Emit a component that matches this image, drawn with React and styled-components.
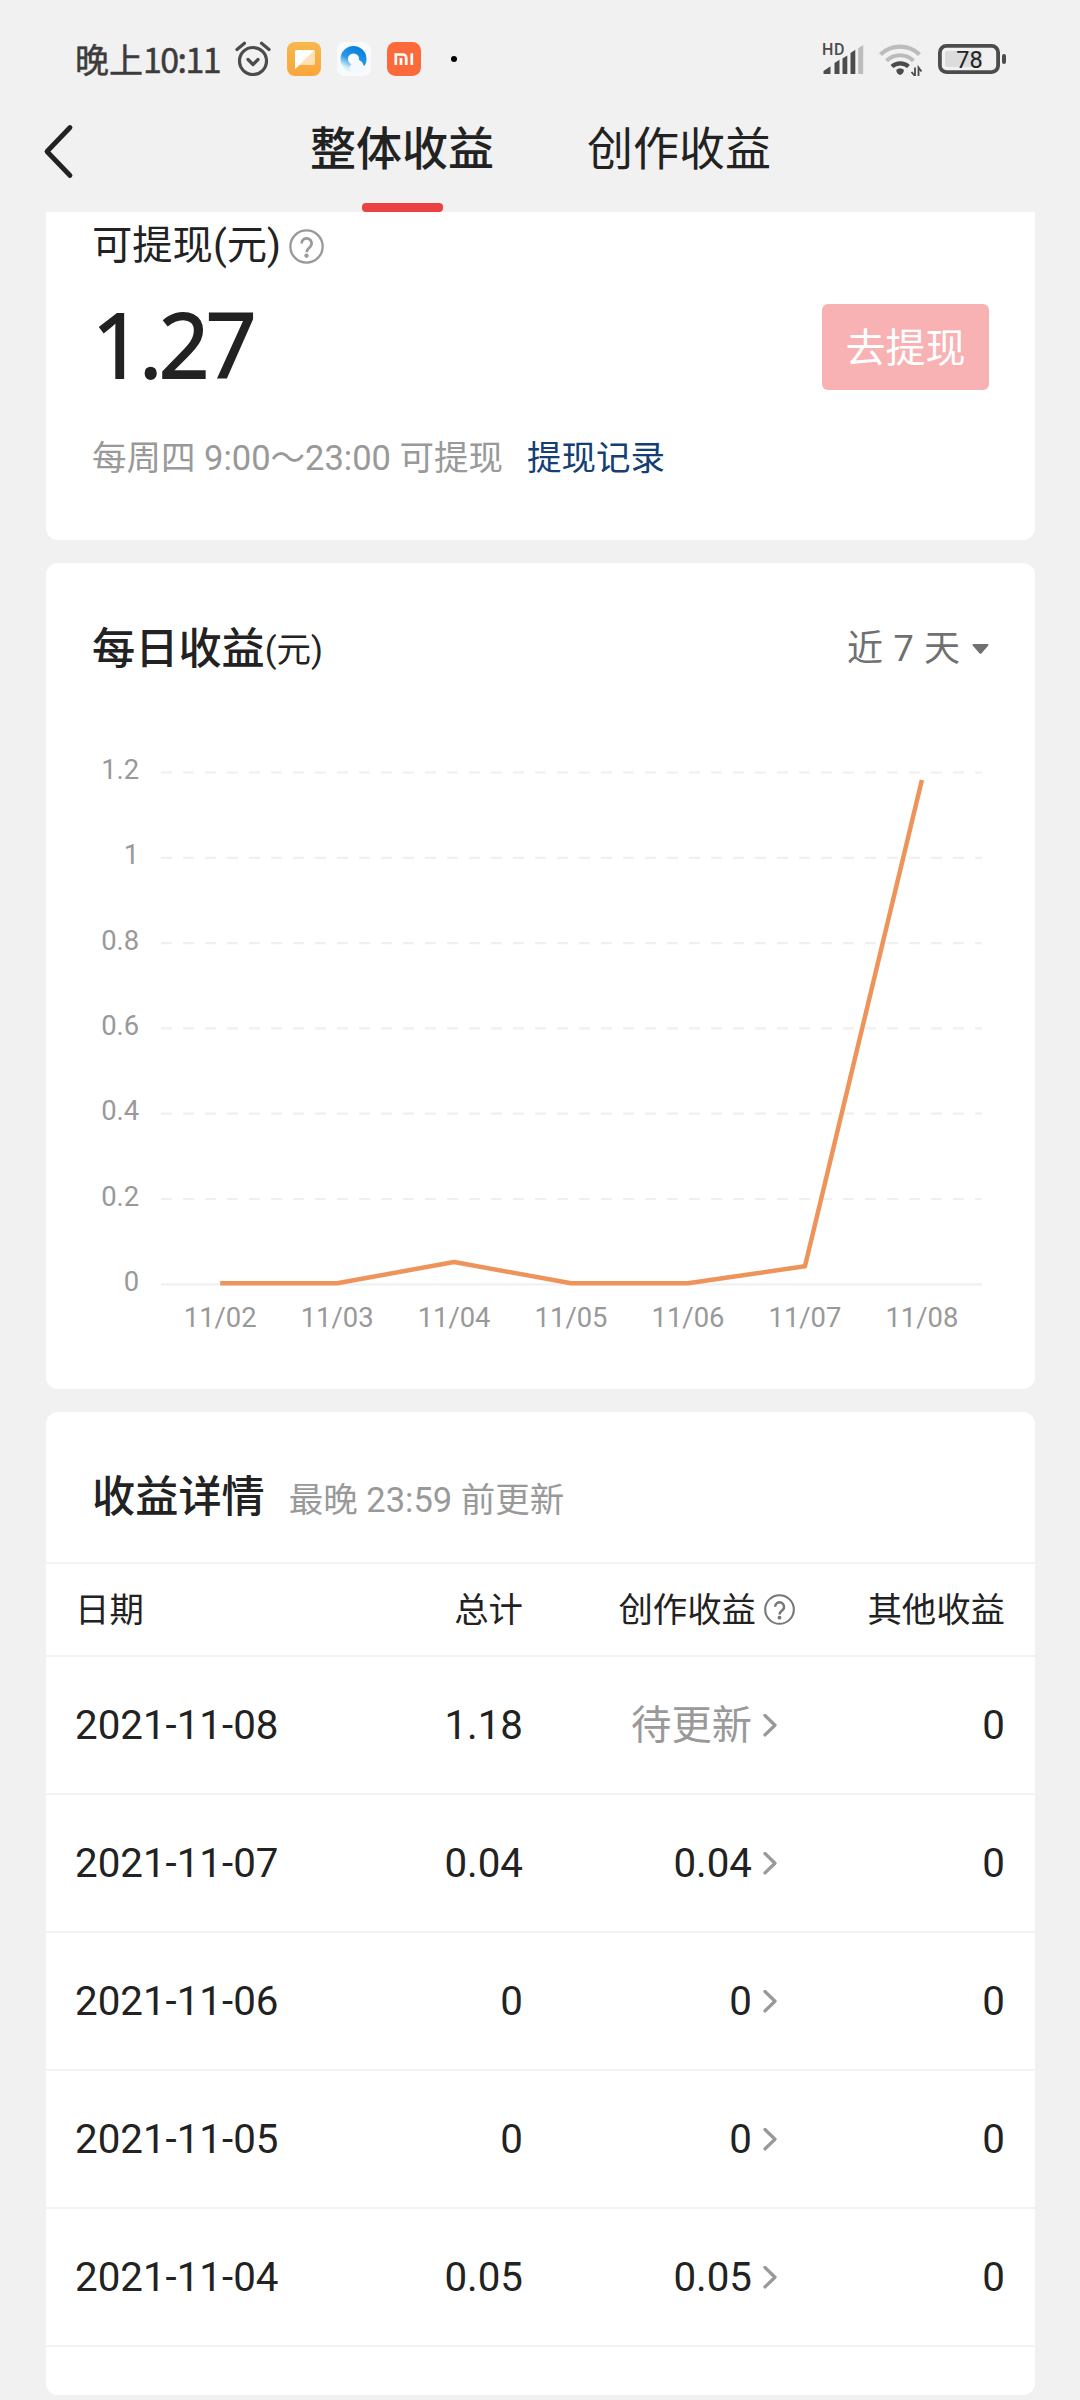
import React, { useState } from 'react';
import styled, { createGlobalStyle } from 'styled-components';

const GlobalStyle = createGlobalStyle`
  * {
    box-sizing: border-box;
  }
  body {
    margin: 0;
    background: #f1f1f1;
    color: #222;
    font-family: Roboto, "Noto Sans CJK SC", sans-serif;
  }
  svg {
    display: block;
    flex: none;
  }
`;

const tabs = ['整体收益', '创作收益'];

const daily = [
    { day: '11/02', value: 0 },
    { day: '11/03', value: 0 },
    { day: '11/04', value: 0.05 },
    { day: '11/05', value: 0 },
    { day: '11/06', value: 0 },
    { day: '11/07', value: 0.04 },
    { day: '11/08', value: 1.18 },
];

const ticks = [1.2, 1, 0.8, 0.6, 0.4, 0.2, 0];

const details = [
    { date: '2021-11-08', total: '1.18', creation: null, other: '0' },
    { date: '2021-11-07', total: '0.04', creation: '0.04', other: '0' },
    { date: '2021-11-06', total: '0', creation: '0', other: '0' },
    { date: '2021-11-05', total: '0', creation: '0', other: '0' },
    { date: '2021-11-04', total: '0.05', creation: '0.05', other: '0' },
];

const Page = styled.div`
  width: 1080px;
  height: 2400px;
  overflow: hidden;
  background: #f1f1f1;
`;

const StatusBar = styled.div`
  display: flex;
  align-items: center;
  justify-content: space-between;
  height: 88px;
  padding: 30px 74px 0 75px;
`;

const StatusGroup = styled.div`
  display: flex;
  align-items: center;
  gap: ${(props) => props.$gap}px;
`;

const Clock = styled.div`
  width: 144px;
  font: 400 34px/40px "Noto Sans CJK SC", sans-serif;
  white-space: nowrap;
  color: #3c3c3c;
  -webkit-text-stroke: 0.5px #3c3c3c;
`;

const ClockDigits = styled.span`
  letter-spacing: -1.6px;
`;

const Dot = styled.div`
  width: 6px;
  height: 6px;
  margin-left: 14px;
  border-radius: 50%;
  background: #000;
`;

const NavBar = styled.div`
  display: flex;
  height: 124px;
  padding-left: 43px;
`;

const BackButton = styled.button`
  width: 268px;
  height: 124px;
  padding: 35px 0 0;
  border: 0;
  background: none;
  align-self: flex-start;
  display: flex;
`;

const Tabs = styled.div`
  display: flex;
  gap: 95px;
`;

const Tab = styled.div`
  display: flex;
  flex-direction: column;
  align-items: center;
  justify-content: space-between;
  width: 182px;
  padding-top: 32px;
  font-size: 46px;
  line-height: 58px;
  font-weight: ${(props) => (props.$active ? 500 : 400)};
  white-space: nowrap;

  &::after {
    content: '';
    width: 81px;
    height: 9px;
    border-radius: 4px;
    background: ${(props) => (props.$active ? '#ec4142' : 'transparent')};
  }
`;

const Content = styled.div`
  display: flex;
  flex-direction: column;
  gap: 23px;
  padding: 0 45px 0 46px;
`;

const Card = styled.section`
  height: ${(props) => props.$height}px;
  border-radius: ${(props) => (props.$cut ? '0 0 12px 12px' : '12px')};
  background: #fff;
`;

const Balance = styled.div`
  display: flex;
  flex-direction: column;
  padding: 9px 46px 0 46px;
`;

const BalanceLabel = styled.div`
  display: flex;
  align-items: center;
  gap: 8px;
  height: 50px;
  font-size: 40.3px;
  line-height: 50px;
`;

const BalanceRow = styled.div`
  display: flex;
  align-items: center;
  justify-content: space-between;
  height: 86px;
  margin-top: 33px;
`;

const Amount = styled.div`
  padding-bottom: 6px;
  font: 400 89px/80px "Open Sans", sans-serif;
  letter-spacing: -3.8px;
  -webkit-text-stroke: 1.8px #222;
`;

const WithdrawButton = styled.button`
  width: 167px;
  height: 86px;
  padding: 4px 0 0;
  border: 0;
  border-radius: 6px;
  background: #f9b2b4;
  color: #fff;
  font: 400 40px/50px Roboto, "Noto Sans CJK SC", sans-serif;
`;

const Hint = styled.div`
  display: flex;
  gap: 24px;
  margin-top: 46px;
  font-size: 34.5px;
  line-height: 44px;
  color: #999;
  white-space: nowrap;
`;

const RecordLink = styled.a`
  color: #133f76;
`;

const CardHeader = styled.div`
  display: flex;
  align-items: center;
  justify-content: space-between;
  padding: 60px 46px 0 46px;
`;

const Title = styled.h2`
  display: flex;
  align-items: center;
  margin: 0;
  font-size: 43.2px;
  line-height: 54px;
  font-weight: 500;
  white-space: nowrap;
`;

const Unit = styled.span`
  font-size: 34.5px;
  font-weight: 400;
`;

const Range = styled.div`
  display: flex;
  align-items: center;
  gap: 12px;
  padding-bottom: 2px;
  font-size: 36px;
  line-height: 48px;
  word-spacing: 1.4px;
  color: #707070;
`;

const Chart = styled.svg`
  margin-top: -2px;
  font-family: Roboto, sans-serif;
  font-size: 27.4px;
  fill: #999;
`;

const DetailHeader = styled.div`
  display: flex;
  align-items: center;
  gap: 24px;
  height: 150px;
  padding: 22px 46px 0;
`;

const UpdateNote = styled.div`
  padding-top: 4px;
  font-size: 34.5px;
  line-height: 44px;
  color: #999;
`;

const Row = styled.div`
  display: grid;
  grid-template-columns: 248px 200px 272px 210px;
  align-items: center;
  height: ${(props) => (props.$head ? 93 : 138)}px;
  padding: ${(props) => (props.$head ? 0 : 2)}px 30px 0 29px;
  border-top: 2px solid #f3f3f3;
  font-size: ${(props) => (props.$head ? 34.4 : 40.3)}px;
  line-height: 50px;
`;

const Cell = styled.div`
  display: flex;
  align-items: center;
  justify-content: ${(props) => (props.$left ? 'flex-start' : 'flex-end')};
  gap: ${(props) => props.$gap || 0}px;
  padding-right: ${(props) => props.$inset || 0}px;
  color: ${(props) => (props.$muted ? '#999' : '#222')};
  white-space: nowrap;
`;

const TableEnd = styled.div`
  border-top: 2px solid #f3f3f3;
`;

const AlarmIcon = () => (
    <svg width="36" height="36" viewBox="0 0 36 36" fill="none" stroke="#4c4c4c" strokeWidth="3.2" strokeLinecap="round" strokeLinejoin="round">
        <circle cx="18" cy="20" r="13.5" />
        <path d="M13 18.5l5 5 5-5M2 8.5l7.5-6.2M34 8.5l-7.5-6.2" />
    </svg>
);

const NoteAppIcon = () => (
    <svg width="34" height="34" viewBox="0 0 34 34">
        <defs>
            <linearGradient id="note" x1="0" y1="0" x2="0" y2="1">
                <stop offset="0" stopColor="#f6b84c" />
                <stop offset="1" stopColor="#fba53c" />
            </linearGradient>
        </defs>
        <rect width="34" height="34" rx="8" fill="url(#note)" />
        <path d="M10 8h16a2 2 0 0 1 2 2v11a2 2 0 0 1-2 2H13l-5 4V10a2 2 0 0 1 2-2z" fill="#ffe2b4" />
        <path d="M10 8h17.5L8 27V10a2 2 0 0 1 2-2z" fill="#fff" />
    </svg>
);

const BrowserAppIcon = () => (
    <svg width="34" height="34" viewBox="0 0 34 34">
        <defs>
            <linearGradient id="ring" x1="0.7" y1="0" x2="0.2" y2="1">
                <stop offset="0" stopColor="#0c83df" />
                <stop offset="0.55" stopColor="#2b9be8" />
                <stop offset="1" stopColor="#d9effc" />
            </linearGradient>
        </defs>
        <rect width="34" height="34" rx="8" fill="#f8fafc" />
        <circle cx="16.5" cy="17" r="9.3" fill="none" stroke="url(#ring)" strokeWidth="7.4" />
        <path d="M14 30a5 5 0 0 1 .6-8 5.5 5.5 0 0 1 9-3 5 5 0 0 1 2.6 3.8A4 4 0 0 1 26.5 30z" fill="#f3f9fe" />
    </svg>
);

const MiAppIcon = () => (
    <svg width="34" height="34" viewBox="0 0 34 34">
        <rect width="34" height="34" rx="8.5" fill="#fc693a" />
        <path d="M8.8 23V12.5h7.2a3.2 3.2 0 0 1 3.2 3.2V23M14 16v7M24.8 11.2V23" fill="none" stroke="#fff" strokeWidth="2.7" />
    </svg>
);

const SignalIcon = () => (
    <svg width="42" height="42" viewBox="0 -4 42 42" fill="#4c4c4c">
        <text x="0" y="13" fontSize="16" fontWeight="500" letterSpacing="0.6" fontFamily="Roboto">HD</text>
        <path d="M1.5 32v-3l7-4.8V32zM12.5 32V21l5-3.2V32zM20.5 32V16.5l4.8-3V32zM28.5 32V11l4.8-3.2V32z" />
        <path d="M36.2 32V6.2L41.2 3v29z" fill="#bcbcbc" />
    </svg>
);

const WifiIcon = () => (
    <svg width="44" height="34" viewBox="0 0 44 34" fill="none" strokeWidth="4.2">
        <path d="M1.5 12.5a28 28 0 0 1 39 0" stroke="#bcbcbc" />
        <path d="M7.5 18.7a19.5 19.5 0 0 1 27 0" stroke="#bcbcbc" />
        <path d="M13 24.5a12.5 12.5 0 0 1 16.5 0" stroke="#4c4c4c" />
        <path d="M17.3 27.8a6 6 0 0 1 7.6 0c0 2.8-1.5 4.7-3.8 5.2-2.3-.5-3.8-2.4-3.8-5.2z" fill="#4c4c4c" />
        <path d="M36 25.5v8.500l-3.500-4M39.500 34v-8.500l3 4" stroke="#4c4c4c" strokeWidth="1.8" />
    </svg>
);

const BatteryIcon = () => (
    <svg width="68" height="30" viewBox="0 0 68 30">
        <rect x="7" y="7" width="37" height="16" rx="2" fill="#dcdcdc" />
        <rect x="1.9" y="1.9" width="58.2" height="26.2" rx="6.5" fill="none" stroke="#4c4c4c" strokeWidth="3.8" />
        <rect x="64" y="10" width="4" height="10" rx="2" fill="#4c4c4c" />
        <text x="31.5" y="23.5" fontSize="23.5" fontWeight="400" textAnchor="middle" fontFamily="Roboto" fill="#222">78</text>
    </svg>
);

const HelpIcon = ({ size, color }) => (
    <svg width={size} height={size} viewBox="0 0 34 34" fill="none" stroke={color} strokeWidth="2.3">
        <circle cx="17" cy="17" r="15.7" />
        <path d="M12.2 14a4.9 4.9 0 1 1 8.3 3.5c-2 1.7-3.4 2.4-3.4 5" strokeWidth="2.7" />
        <circle cx="17" cy="26" r="2.1" fill={color} stroke="none" />
    </svg>
);

const BackIcon = () => (
    <svg width="32" height="56" viewBox="0 0 32 56" fill="none" stroke="#222" strokeWidth="4.8" strokeLinecap="round" strokeLinejoin="round">
        <path d="M27 4.5L4 28.5l23 24" />
    </svg>
);

const ArrowIcon = () => (
    <svg width="14" height="24" viewBox="0 0 14 24" fill="none" stroke="#999" strokeWidth="3.3" strokeLinecap="round" strokeLinejoin="round">
        <path d="M2 1.5l10 9.700-10 9.700" />
    </svg>
);

const CaretIcon = () => (
    <svg width="17" height="12" viewBox="0 0 17 12">
        <path d="M1.5 1h14c1 0 1.3 1 .6 1.7L9.6 10.2c-.6.7-1.6.7-2.2 0L.9 2.7C.2 2 .5 1 1.5 1z" fill="#707070" />
    </svg>
);

// chart scale: 6 steps of 0.2 over the plot height
const chartTop = 97.5;
const chartBottom = 609.3;
const toX = (index) => 174.2 + index * 116.95;
const toY = (value) => chartBottom - (value / 1.2) * (chartBottom - chartTop);

function EarningsChart() {
    const points = daily.map((item, i) => `${toX(i)},${toY(item.value) - 1}`).join(' ');

    return (
        <Chart width="989" height="714" viewBox="0 0 989 714">
            {ticks.map((tick) => (
                <g key={tick}>
                    <line
                        x1="115"
                        x2="936"
                        y1={toY(tick)}
                        y2={toY(tick)}
                        stroke="#f0f0f0"
                        strokeWidth="2.2"
                        strokeDasharray={tick === 0 ? undefined : '11 11'}
                    />
                    <text x="93.2" y={toY(tick) + 6.5} textAnchor="end">{tick}</text>
                </g>
            ))}
            {daily.map((item, i) => (
                <text key={item.day} x={toX(i)} y={chartBottom + 42.7} textAnchor="middle">{item.day}</text>
            ))}
            <polyline points={points} fill="none" stroke="#ee935a" strokeWidth="4.5" strokeLinejoin="round" />
        </Chart>
    );
}

function App() {
    const [activeTab, setActiveTab] = useState(0);

    return (
        <Page>
            <GlobalStyle />
            <StatusBar>
                <StatusGroup $gap={16}>
                    <Clock>晚上<ClockDigits>10:11</ClockDigits></Clock>
                    <AlarmIcon />
                    <NoteAppIcon />
                    <BrowserAppIcon />
                    <MiAppIcon />
                    <Dot />
                </StatusGroup>
                <StatusGroup $gap={15}>
                    <SignalIcon />
                    <WifiIcon />
                    <BatteryIcon />
                </StatusGroup>
            </StatusBar>
            <NavBar>
                <BackButton>
                    <BackIcon />
                </BackButton>
                <Tabs>
                    {tabs.map((name, i) => (
                        <Tab key={name} $active={i === activeTab} onClick={() => setActiveTab(i)}>
                            {name}
                        </Tab>
                    ))}
                </Tabs>
            </NavBar>

            <Content>
                <Card $height={328} $cut>
                    <Balance>
                        <BalanceLabel>
                            可提现(元)
                            <HelpIcon size={35} color="#999" />
                        </BalanceLabel>
                        <BalanceRow>
                            <Amount>1.27</Amount>
                            <WithdrawButton>去提现</WithdrawButton>
                        </BalanceRow>
                        <Hint>
                            <span>每周四 9:00～23:00 可提现</span>
                            <RecordLink>提现记录</RecordLink>
                        </Hint>
                    </Balance>
                </Card>

                <Card $height={826}>
                    <CardHeader>
                        <Title>每日收益<Unit>(元)</Unit></Title>
                        <Range>
                            近 7 天
                            <CaretIcon />
                        </Range>
                    </CardHeader>
                    <EarningsChart />
                </Card>

                <Card $height={983}>
                    <DetailHeader>
                        <Title>收益详情</Title>
                        <UpdateNote>最晚 23:59 前更新</UpdateNote>
                    </DetailHeader>
                    <Row $head>
                        <Cell $left>日期</Cell>
                        <Cell>总计</Cell>
                        <Cell $gap={8}>
                            创作收益
                            <HelpIcon size={31} color="#777" />
                        </Cell>
                        <Cell>其他收益</Cell>
                    </Row>
                    {details.map((item) => (
                        <Row key={item.date}>
                            <Cell $left>{item.date}</Cell>
                            <Cell>{item.total}</Cell>
                            <Cell $gap={11} $inset={18} $muted={item.creation === null}>
                                {item.creation === null ? '待更新' : item.creation}
                                <ArrowIcon />
                            </Cell>
                            <Cell>{item.other}</Cell>
                        </Row>
                    ))}
                    <TableEnd />
                </Card>
            </Content>
        </Page>
    );
}

export default App;
